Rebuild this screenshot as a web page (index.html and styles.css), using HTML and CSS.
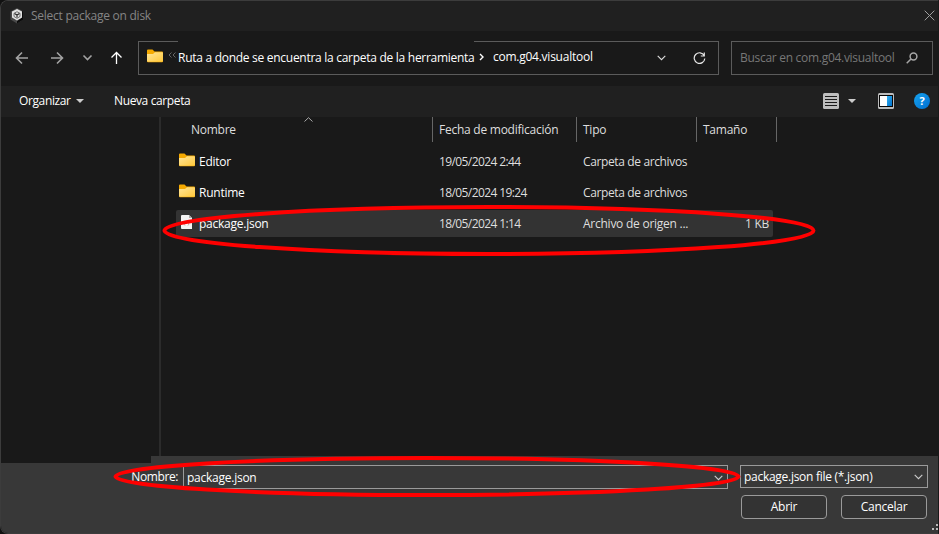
FILE: index.html
```html
<!DOCTYPE html>
<html lang="es">
<head>
<meta charset="utf-8">
<title>Select package on disk</title>
<link rel="stylesheet" href="styles.css">
</head>
<body>
<svg class="defs" width="0" height="0">
  <defs>
    <linearGradient id="gold" x1="0" y1="0" x2="1" y2="1"><stop offset="0" stop-color="#ffe59a"/><stop offset="1" stop-color="#ffc83a"/></linearGradient>
    <linearGradient id="blue" x1="0" y1="0" x2="1" y2="1"><stop offset="0" stop-color="#2fb0f2"/><stop offset="1" stop-color="#0070cc"/></linearGradient>
    <symbol id="folder" viewBox="0 0 16 14"><path d="M0 1.5Q0 .5 1 .5H5.5L7.5 2.5H15Q16 2.5 16 3.5V12Q16 13.3 15 13.3H1Q0 13.3 0 12Z" fill="#f5a900"/><path d="M0 5H6L8 3.3H15Q16 3.3 16 4.3V12Q16 12.8 15 12.8H1Q0 12.8 0 12Z" fill="url(#gold)"/></symbol>
    <symbol id="down" viewBox="0 0 9 6"><path d="M.7.9 4.5 4.7 8.3.9" fill="none" stroke="currentColor" stroke-width="1.1"/></symbol>
  </defs>
</svg>
<div class="dialog">
  <header class="titlebar">
    <svg class="logo" width="14" height="16" viewBox="0 0 14 16"><path d="M7 0 13.5 3.5V11.5L7 15.5.5 11.5V3.5Z" fill="#484848"/><path d="M7 15.500 13.500 11.500V3.500L12 3V9.500L7 13.200Z" fill="#0c0c0c"/><path d="M7 1 12 3.500V9.500L7 12.500 2 9.500V3.500Z" fill="#e2e2e2"/><path d="M7 7 4.500 5.500M7 7 9.500 5.500M7 7V9.500" stroke="#222" stroke-width="1.100"/><path d="M7 3.700 10 5.300V8.500L7 10.300 4 8.500V5.300Z" fill="none" stroke="#555" stroke-width=".8"/></svg>
    <span class="title">Select package on disk</span>
    <svg class="close" width="11" height="11" viewBox="0 0 11 11"><path d="M.7.7 10.3 10.3M10.3.7.7 10.3" stroke="#a0a0a0"/></svg>
  </header>
  <nav class="navbar">
    <svg class="arrows" width="112" height="16" viewBox="0 0 112 16" fill="none" stroke-width="1.6"><path d="M13 8H1.5M7 2.5 1.5 8 7 13.5M36 8H47.5M42 2.5 47.5 8 42 13.5M68.5 5.5 72.5 9.5 76.5 5.5" stroke="#a3a3a3"/><path d="M101.500 14V2.500M96.500 7.500 101.500 2.500 106.500 7.500" stroke="#fff" stroke-width="1.3"/></svg>
    <div class="address">
      <svg class="folder" width="16" height="14"><use href="#folder"/></svg>
      <svg class="more" width="8" height="6" viewBox="0 0 8 6"><path d="M3.500 .5 1 3 3.500 5.500M7.500 .5 5 3 7.500 5.500" fill="none" stroke="#666"/></svg>
      <span class="route">Ruta a donde se encuentra la carpeta de la herramienta</span>
      <svg class="sep" width="5" height="8" viewBox="0 0 5 8"><path d="M1 1 4 4 1 7" fill="none" stroke="#fff" stroke-width="1.4"/></svg>
      <span class="current">com.g04.visualtool</span>
      <svg class="history" width="9" height="6"><use href="#down"/></svg>
      <svg class="reload" width="13" height="13" viewBox="0 0 13 13" fill="none" stroke="#e4e4e4" stroke-width="1.200"><path d="M11.200 3.600A5.300 5.300 0 1 0 11.800 6.500M11.300.5V4H7.800"/></svg>
    </div>
    <div class="search">
      <span>Buscar en com.g04.visualtool</span>
      <svg width="12" height="12" viewBox="0 0 12 12" fill="none" stroke="#a5a5a5" stroke-width="1.500"><circle cx="7.500" cy="4.500" r="3.400"/><path d="M5 7 .7 11.300"/></svg>
    </div>
  </nav>
  <div class="toolbar">
    <span class="organize">Organizar</span><i class="caret"></i>
    <span class="newfolder">Nueva carpeta</span>
    <svg class="view" width="16" height="16" viewBox="0 0 16 16"><rect width="16" height="16" rx="1.500" fill="#bdbdbd"/><path d="M2 3.500H14M2 6.500H14M2 9.500H14M2 12.500H14" stroke="#1a1a1a"/></svg>
    <i class="caret viewcaret"></i>
    <svg class="preview" width="16" height="16" viewBox="0 0 16 16"><rect width="16" height="16" rx="1.500" fill="#bdbdbd"/><rect x="1" y="2" width="14" height="12" fill="#080808"/><rect x="2" y="3" width="7" height="10" fill="#fff"/><rect x="9" y="3" width="5" height="10" fill="url(#blue)"/></svg>
    <span class="help">?</span>
  </div>
  <main class="content">
    <aside class="sidebar"></aside>
    <section class="files">
      <div class="grid head">
        <span>Nombre<svg class="sort" width="9" height="5" viewBox="0 0 9 5"><path d="M.5 4.500 4.500.7 8.500 4.500" fill="none" stroke="#aaa"/></svg></span><span>Fecha de modificación</span><span>Tipo</span><span>Tamaño</span>
      </div>
      <div class="grid row"><span class="name"><svg width="16" height="14"><use href="#folder"/></svg><b>Editor</b></span><span class="date">19/05/2024 2:44</span><span class="type">Carpeta de archivos</span><span></span></div>
      <div class="grid row"><span class="name"><svg width="16" height="14"><use href="#folder"/></svg><b>Runtime</b></span><span class="date">18/05/2024 19:24</span><span class="type">Carpeta de archivos</span><span></span></div>
      <div class="grid row selected"><span class="name"><svg width="16" height="14" viewBox="0 0 16 14"><path d="M3 0H10L13 3V14H3Q2 14 2 13V1Q2 0 3 0Z" fill="#f4f4f4"/><path d="M10 0V3H13Z" fill="#aaa"/><path d="M6 7.500 5 9 6 10.500M9 7.500 10 9 9 10.500" fill="none" stroke="#d3a9a0"/></svg><b>package.json</b></span><span class="date">18/05/2024 1:14</span><span>Archivo de origen ...</span><span class="kb">1 KB</span></div>
    </section>
  </main>
  <footer class="footer">
    <div class="fields">
      <label>Nombre:</label>
      <div class="input"><span>package.json</span><svg width="9" height="6"><use href="#down"/></svg></div>
      <div class="select"><span>package.json file (*.json)</span><svg width="9" height="6"><use href="#down"/></svg></div>
    </div>
    <div class="actions"><button>Abrir</button><button>Cancelar</button></div>
  </footer>
  <i class="sidefoot"></i>
  <svg class="grip" width="6" height="6" viewBox="0 0 6 6" fill="#bbb"><path d="M4 0H6V2H4ZM0 4H2V6H0ZM4 4H6V6H4Z"/></svg>
  <svg class="marks" width="939" height="534" viewBox="0 0 939 534" fill="none" stroke="#f00" stroke-width="4"><ellipse cx="489" cy="230.500" rx="324.500" ry="23.500"/><ellipse cx="427" cy="476.500" rx="311.500" ry="18.500"/></svg>
</div>
</body>
</html>
```
FILE: styles.css
```css
* { box-sizing: border-box; }
body { margin: 0; background: #111; font: 12px/16px "Open Sans", "Noto Sans", sans-serif; letter-spacing: -.25px; color: #fff; overflow: hidden; }
.defs { position: absolute; }
svg { display: block; flex: none; }
span, label { white-space: nowrap; }
.dialog { position: relative; width: 939px; height: 534px; display: flex; flex-direction: column; background: #191919; border: 1px solid #3c3c3c; border-right-color: #191919; border-radius: 8px 0 0 8px; overflow: hidden; }
.titlebar { height: 30px; flex: none; background: #202020; display: flex; align-items: center; padding: 0 3px 0 9px; color: #858585; }
.title { margin-left: 7px; }
.close { margin-left: auto; margin-top: -2px; }
.navbar { height: 55px; flex: none; display: flex; align-items: center; padding: 0 0 2px 14px; }
.arrows { margin-right: 11px; }
.address { width: 581px; height: 34px; display: flex; align-items: center; border: 1px solid #5b5b5b; border-top: 0; background: linear-gradient(#5b5b5b, #5b5b5b) 0 0 / 39px 1px no-repeat, linear-gradient(#5b5b5b, #5b5b5b) 100% 0 / 244px 1px no-repeat; padding-left: 8px; }
.address .folder { margin-top: -3px; }
.more { margin: -4px 2px 0 5px; }
.route { width: 301px; letter-spacing: -.28px; padding-top: 1px; }
.sep { margin-right: 9px; }
.current { width: 164px; }
.history { color: #ddd; margin: 2px 27px 0 0; }
.reload { margin-top: 2px; }
.search { width: 202px; height: 34px; margin-left: 12px; border: 1px solid #5b5b5b; display: flex; align-items: center; padding: 0 14px 0 8px; color: #777; justify-content: space-between; letter-spacing: -.29px; }
.toolbar { height: 31px; flex: none; background: #202020; display: flex; align-items: center; padding: 0 8px 1px 18px; letter-spacing: -.38px; }
.organize { width: 57px; }
.caret { border: 4px solid transparent; border-top-color: #ccc; border-bottom: 0; }
.newfolder { margin-left: 30px; }
.view { margin-left: auto; }
.viewcaret { margin: 0 22px 0 9px; }
.help { width: 16px; height: 16px; border-radius: 50%; margin-left: 20px; background: linear-gradient(135deg, #16a3ef, #006ed0); text-align: center; font-weight: 700; font-size: 11px; }
.content { height: 339px; flex: none; display: flex; }
.sidebar { width: 160px; border-right: 2px solid #2b2b2b; }
.files { width: 616px; }
.grid { display: grid; grid-template-columns: 257px 144px 120px 80px; margin-left: 15px; color: #dedede; }
.head { height: 25px; margin-bottom: 6px; }
.head > span { border-right: 1px solid #666; padding: 5px 0 0 6px; position: relative; }
.head > span:first-child { padding-left: 15px; }
.sort { position: absolute; left: 128px; top: 0; }
.row { height: 27px; margin-bottom: 4px; width: 597px; align-items: center; grid-template-columns: 257px 144px 120px 76px; }
.row > span { padding-left: 6px; }
.row .name { display: flex; align-items: center; gap: 4px; padding-left: 3px; color: #fff; }
.row .date { letter-spacing: -.6px; }
.row .type { letter-spacing: -.37px; }
.name svg { margin-top: -3px; }
b { font-weight: 400; }
.selected { background: #333; border-radius: 2px; }
.row .kb { text-align: right; padding: 0 4px 0 0; }
.footer { flex: 1; background: #383838; padding-top: 9px; }
.fields { display: flex; }
label { width: 182px; padding: 4px 5px 0 0; text-align: right; letter-spacing: -.4px; }
.input, .select { height: 24px; border: 1px solid #9a9a9a; display: flex; align-items: center; justify-content: space-between; padding: 0 4px; color: #fff; }
.input { width: 545px; padding: 1px 4px 0 3px; }
.select { width: 188px; height: 23px; margin-left: 12px; padding: 0 4px 0 3px; letter-spacing: -.28px; }
.input svg, .select svg { color: #ccc; }
.actions { display: flex; justify-content: flex-end; gap: 14px; margin: 6px 11px 0 0; }
button { width: 86px; height: 24px; border: 1px solid #9a9a9a; border-radius: 4px; background: #333; color: #fff; padding: 0; font: inherit; letter-spacing: -.25px; }
.sidefoot { position: absolute; left: 0; top: 455px; width: 150px; height: 7px; background: #191919; }
.grip { position: absolute; right: 0; bottom: 3px; }
.marks { position: absolute; left: -1px; top: -1px; }
```
